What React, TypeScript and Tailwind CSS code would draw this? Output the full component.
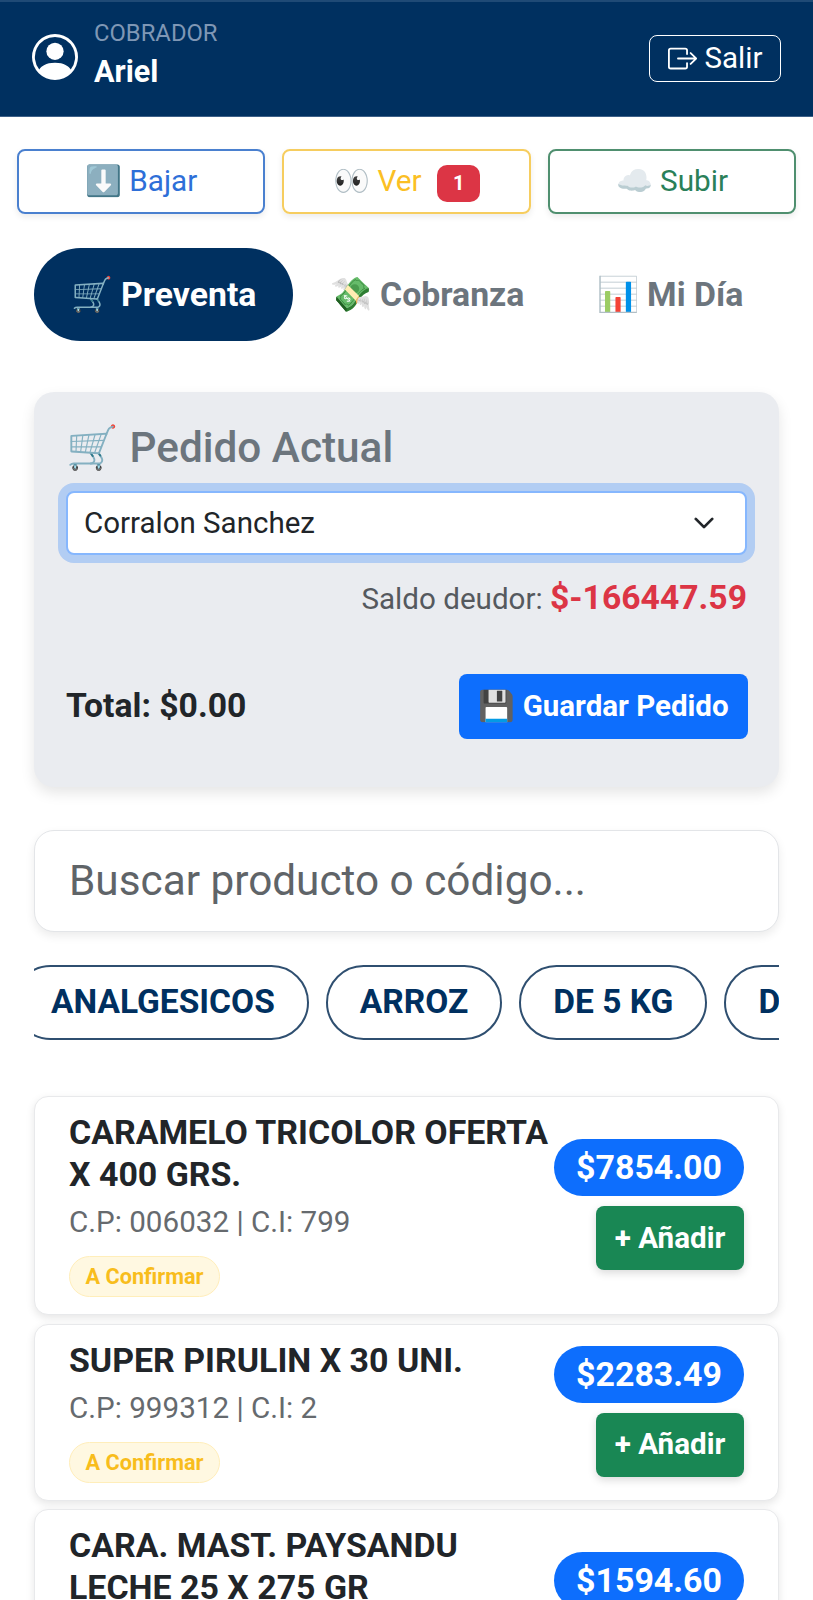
import { BsPersonCircle, BsBoxArrowRight, BsChevronDown } from 'react-icons/bs'

const products = [
  { name: 'CARAMELO TRICOLOR OFERTA X 400 GRS.', meta: 'C.P: 006032 | C.I: 799', price: '$7854.00' },
  { name: 'SUPER PIRULIN X 30 UNI.', meta: 'C.P: 999312 | C.I: 2', price: '$2283.49' },
  { name: 'CARA. MAST. PAYSANDU LECHE 25 X 275 GR', meta: 'C.P: 000000 | C.I: 1', price: '$1594.60' },
]

const categories = ['ARROZ', 'DE 5 KG', 'DULCES']

function ProductCard({ name, meta, price }: { name: string; meta: string; price: string }) {
  return (
    <div className="flex items-center justify-between rounded-[14px] border border-[#e8e9eb] bg-white pb-[17px] pl-[34px] pr-[34px] pt-[15px] shadow-[0_3px_8px_rgba(0,0,0,0.1)]">
      <div className="min-w-0 flex-1">
        <h3 className="text-[33.9px] font-bold leading-[42px] text-[#212529]">{name}</h3>
        <p className="mt-[6px] text-[29.6px] leading-[40px] text-[#666a6e]">{meta}</p>
        <span className="mt-[14px] inline-block rounded-full border border-[#ffeeba] bg-[#fff8e1] px-[15.5px] py-[5px] text-[21.7px] font-bold leading-[29px] text-[#f8bd1c]">
          A Confirmar
        </span>
      </div>
      <div className="flex w-[190px] shrink-0 flex-col items-end gap-[10px]">
        <span className="rounded-full bg-[#0d6efd] px-[22px] py-[7px] text-[33.9px] font-bold leading-[43px] text-white">{price}</span>
        <button className="h-[64px] w-[148px] rounded-[8px] bg-[#198754] text-[29.6px] font-bold text-white shadow-[0_3px_8px_rgba(0,0,0,0.15)]">
          + Añadir
        </button>
      </div>
    </div>
  )
}

export default function App() {
  return (
    <div className="h-[1600px] overflow-hidden bg-white font-['Roboto',sans-serif]">
      {/* Header */}
      <header className="flex h-[117px] items-center justify-between border-t-2 border-b border-t-[#1f4a76] border-b-[#3d6088] bg-[#003060] px-[32px]">
        <div className="-mt-[4px] flex items-center gap-[16px]">
          <BsPersonCircle className="h-[46px] w-[46px] text-white" />
          <div className="-mt-[8px]">
            <div className="text-[23.8px] leading-[34px] text-[#7f97b5]">COBRADOR</div>
            <div className="mt-[3px] text-[30.5px] font-bold leading-[38px] text-white">Ariel</div>
          </div>
        </div>
        <button className="-mt-[2px] flex h-[47px] w-[132px] items-center justify-center gap-[8px] rounded-[8px] border border-white text-[29.5px] text-white">
          <BsBoxArrowRight className="h-[29px] w-[29px]" />
          Salir
        </button>
      </header>

      {/* Sync buttons */}
      <div className="mt-[32px] flex gap-[17px] px-[17px]">
        <button className="flex h-[65px] flex-1 items-center justify-center gap-[8px] rounded-[8px] border-2 border-[#4a80cf] text-[29.7px] text-[#2e6fd8] shadow-[0_3px_6px_rgba(0,0,0,0.08)]">
          ⬇️ Bajar
        </button>
        <button className="flex h-[65px] flex-1 items-center justify-center gap-[8px] rounded-[8px] border-2 border-[#f6cd5f] text-[29.7px] text-[#fbbf24] shadow-[0_3px_6px_rgba(0,0,0,0.08)]">
          👀 Ver
          <span className="ml-[8px] mt-[3px] rounded-[10px] bg-[#dc3545] px-[15.5px] py-[3px] text-[20px] font-bold leading-[31px] text-white">1</span>
        </button>
        <button className="flex h-[65px] flex-1 items-center justify-center gap-[8px] rounded-[8px] border-2 border-[#4f8f6f] text-[29.7px] text-[#2a8059] shadow-[0_3px_6px_rgba(0,0,0,0.08)]">
          ☁️ Subir
        </button>
      </div>

      {/* Tabs */}
      <nav className="mt-[34px] flex px-[34px]">
        <div className="flex h-[93px] w-[259px] items-center justify-center gap-[12px] rounded-full bg-[#003060] pt-[2px] text-[33.8px] font-bold text-white">🛒 Preventa</div>
        <div className="flex h-[93px] w-[268px] items-center justify-center gap-[12px] pt-[2px] text-[33.8px] font-bold text-[#6c757d]">💸 Cobranza</div>
        <div className="flex h-[93px] w-[218px] items-center justify-center gap-[12px] pt-[2px] text-[33.8px] font-bold text-[#6c757d]">📊 Mi Día</div>
      </nav>

      <main className="mt-[51px] px-[34px]">
        {/* Pedido actual */}
        <section className="h-[395px] rounded-[20px] bg-[#eaecf0] px-[32px] pt-[29px] shadow-[0_6px_14px_rgba(0,0,0,0.1)]">
          <h2 className="text-[42.3px] font-medium leading-[54px] text-[#6c757d]">🛒 Pedido Actual</h2>
          <div className="mt-[16px] flex h-[64px] items-center justify-between rounded-[8px] border-2 border-[#86b7fe] bg-white pl-[16px] pr-[30px] text-[29.5px] text-[#212529] shadow-[0_0_0_8px_rgba(13,110,253,0.25)]">
            Corralon Sanchez
            <BsChevronDown className="h-[22px] w-[22px] stroke-[1]" />
          </div>
          <p className="mt-[21px] text-right text-[29.6px] leading-[44px] text-[#55595e]">
            Saldo deudor: <span className="text-[33.7px] font-bold text-[#dc3545]">$-166447.59</span>
          </p>
          <div className="mt-[53px] flex items-center justify-between">
            <span className="text-[33.7px] font-bold text-[#212529]">Total: $0.00</span>
            <button className="-mr-[1px] flex h-[65px] w-[289px] items-center justify-center gap-[8px] rounded-[8px] bg-[#0d6efd] text-[29.5px] font-bold text-white">💾 Guardar Pedido</button>
          </div>
        </section>

        {/* Buscador */}
        <div className="mt-[43px] flex h-[102px] items-center rounded-[20px] border border-[#e3e5e8] bg-white px-[34px] text-[42.3px] text-[#5f6468] shadow-[0_4px_10px_rgba(0,0,0,0.08)]">
          Buscar producto o código...
        </div>

        {/* Categorias */}
        <div className="mt-[33px] flex gap-[17px] overflow-hidden">
          <span className="-ml-[21px] flex h-[75px] shrink-0 items-center rounded-full border-2 border-[#2f4f70] pl-[36px] pr-[32px] text-[33.5px] font-bold text-[#003060]">ANALGESICOS</span>
          {categories.map((c) => (
            <span key={c} className="flex h-[75px] shrink-0 items-center rounded-full border-2 border-[#2f4f70] px-[32px] text-[33.5px] font-bold text-[#003060]">{c}</span>
          ))}
        </div>

        {/* Productos */}
        <div className="mt-[56px] flex flex-col gap-[8.5px]">
          {products.map((p) => (
            <ProductCard key={p.price} {...p} />
          ))}
        </div>
      </main>
    </div>
  )
}
